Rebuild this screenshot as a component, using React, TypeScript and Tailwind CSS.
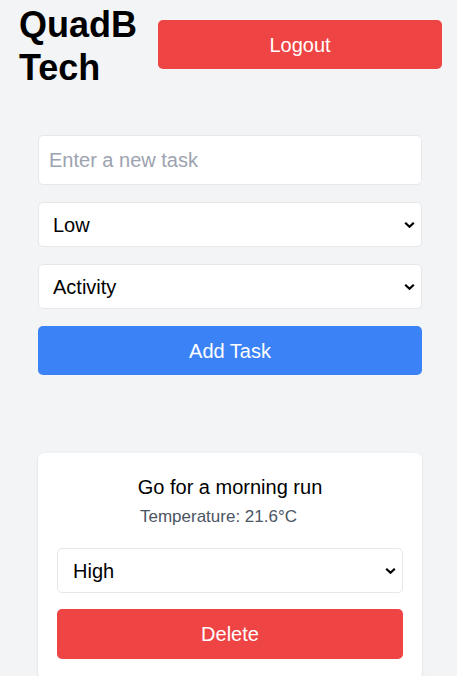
import React, { useState } from "react";

function Chevron() {
  return (
    <svg
      className="pointer-events-none absolute right-[7px] top-1/2 -translate-y-1/2"
      width="11"
      height="7"
      viewBox="0 0 11 7"
      fill="none"
    >
      <path d="M1.2 1.2 L5.5 5.3 L9.8 1.2" stroke="#000" strokeWidth="2.2" />
    </svg>
  );
}

interface SelectBoxProps {
  value: string;
  onChange: (value: string) => void;
  options: string[];
  padLeft?: string;
}

function SelectBox({ value, onChange, options, padLeft = "pl-[14px]" }: SelectBoxProps) {
  return (
    <div className="relative">
      <select
        value={value}
        onChange={(e) => onChange(e.target.value)}
        className={`h-[45px] w-full appearance-none rounded-[5px] border border-[#e5e7eb] bg-white ${padLeft} pr-[24px] text-[20px] outline-none`}
      >
        {options.map((o) => (
          <option key={o}>{o}</option>
        ))}
      </select>
      <Chevron />
    </div>
  );
}

export default function App() {
  const [task, setTask] = useState("");
  const [priority, setPriority] = useState("Low");
  const [category, setCategory] = useState("Activity");
  const [cardPriority, setCardPriority] = useState("High");

  return (
    <div className="min-h-[676px] bg-[#f3f4f6] font-['Liberation_Sans',Arial,sans-serif] text-black">
      <header className="flex items-start pl-[19px] pr-[15px]">
        <h1 className="w-[139px] shrink-0 pt-[3px] text-[36px] leading-[43px] font-bold">QuadB Tech</h1>
        <button className="mt-[20px] ml-auto h-[49px] w-[284px] rounded-[5px] bg-[#ef4444] text-[20px] text-white">
          Logout
        </button>
      </header>

      <div className="mt-[46px] ml-[38px] w-[384px] flex flex-col gap-[17px]">
        <input
          type="text"
          value={task}
          onChange={(e) => setTask(e.target.value)}
          placeholder="Enter a new task"
          className="h-[50px] w-full rounded-[5px] border border-[#e5e7eb] bg-white px-[10px] text-[20px] placeholder-[#9ca3af] outline-none"
        />
        <SelectBox value={priority} onChange={setPriority} options={["Low", "Medium", "High"]} />
        <SelectBox value={category} onChange={setCategory} options={["Activity", "Work", "Personal"]} />
        <button className="h-[49px] w-full rounded-[5px] bg-[#3b82f6] text-[20px] text-white">
          Add Task
        </button>
      </div>

      <div className="mt-[78px] ml-[38px] w-[384px] rounded-[6px] bg-white px-[19px] pt-[20px] pb-[20px] shadow-sm">
        <h3 className="text-center text-[20px] leading-[28px]">Go for a morning run</h3>
        <p className="mt-[4px] pr-[23px] text-center text-[17px] leading-[24px] text-[#4b5563]">Temperature: 21.6°C</p>
        <div className="mt-[19px]">
          <SelectBox
            value={cardPriority}
            onChange={setCardPriority}
            options={["Low", "Medium", "High"]}
            padLeft="pl-[15px]"
          />
        </div>
        <button className="mt-[16px] h-[50px] w-full rounded-[5px] bg-[#ef4444] text-[20px] text-white">
          Delete
        </button>
      </div>
    </div>
  );
}
